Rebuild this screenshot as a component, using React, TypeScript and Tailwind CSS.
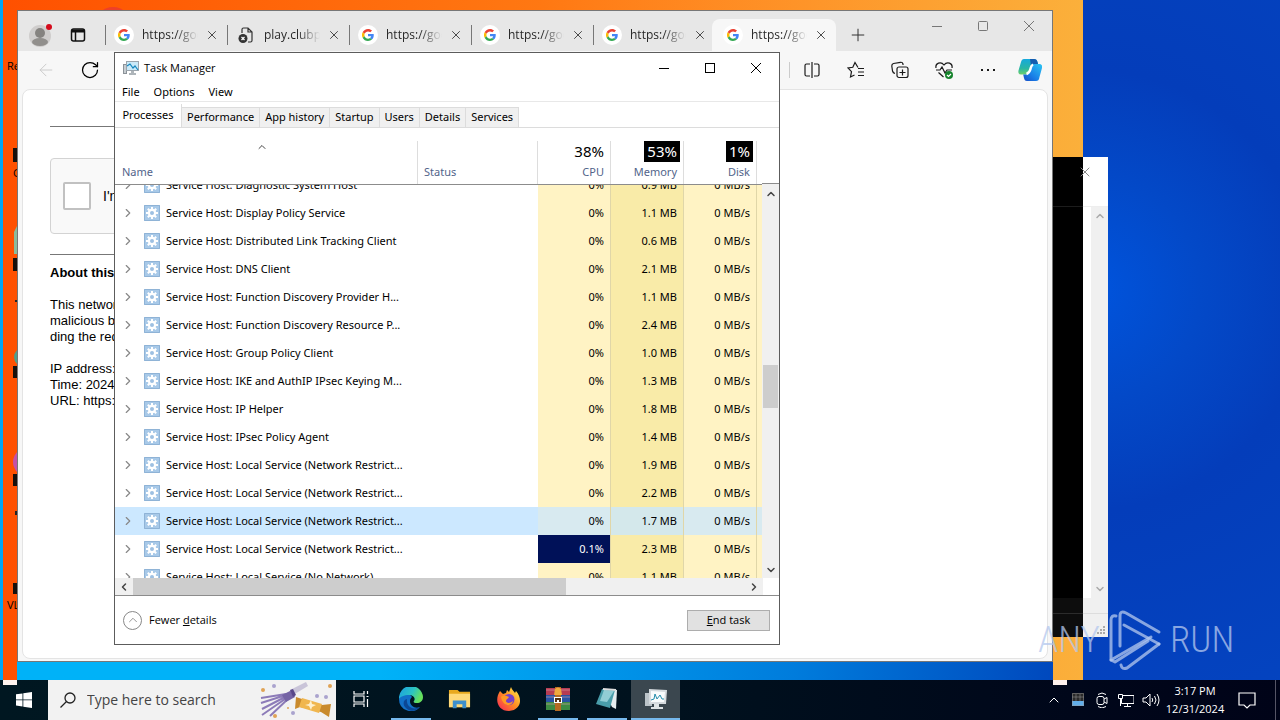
import { useLayoutEffect, useRef } from "react";
import type { ReactNode } from "react";
import { ArrowLeft, RotateCw, X, Plus, ChevronRight, ChevronUp, ChevronDown, ChevronLeft } from "lucide-react";

type Process = { name: string; cpu: string; memory: string; selected?: boolean; hot?: boolean };

const processes: Process[] = [
  { name: "Service Host: Diagnostic System Host", cpu: "0%", memory: "0.9 MB" },
  { name: "Service Host: Display Policy Service", cpu: "0%", memory: "1.1 MB" },
  { name: "Service Host: Distributed Link Tracking Client", cpu: "0%", memory: "0.6 MB" },
  { name: "Service Host: DNS Client", cpu: "0%", memory: "2.1 MB" },
  { name: "Service Host: Function Discovery Provider H...", cpu: "0%", memory: "1.1 MB" },
  { name: "Service Host: Function Discovery Resource P...", cpu: "0%", memory: "2.4 MB" },
  { name: "Service Host: Group Policy Client", cpu: "0%", memory: "1.0 MB" },
  { name: "Service Host: IKE and AuthIP IPsec Keying M...", cpu: "0%", memory: "1.3 MB" },
  { name: "Service Host: IP Helper", cpu: "0%", memory: "1.8 MB" },
  { name: "Service Host: IPsec Policy Agent", cpu: "0%", memory: "1.4 MB" },
  { name: "Service Host: Local Service (Network Restrict...", cpu: "0%", memory: "1.9 MB" },
  { name: "Service Host: Local Service (Network Restrict...", cpu: "0%", memory: "2.2 MB" },
  { name: "Service Host: Local Service (Network Restrict...", cpu: "0%", memory: "1.7 MB", selected: true },
  { name: "Service Host: Local Service (Network Restrict...", cpu: "0.1%", memory: "2.3 MB", hot: true },
  { name: "Service Host: Local Service (No Network)", cpu: "0%", memory: "1.1 MB" },
];

const browserTabs = [
  { title: "https://goo", google: true },
  { title: "play.clubpe", google: false },
  { title: "https://goo", google: true },
  { title: "https://goo", google: true },
  { title: "https://goo", google: true },
];

function GoogleIcon() {
  return (
    <span className="flex size-5 shrink-0 items-center justify-center rounded-full bg-white">
      <svg viewBox="0 0 48 48" className="size-3">
        <path fill="#ea4335" d="M24 9.5c3.5 0 6.700 1.200 9.200 3.600l6.900-6.900C35.900 2.400 30.500 0 24 0 14.600 0 6.500 5.400 2.600 13.200l8 6.200C12.400 13.700 17.700 9.500 24 9.500z" />
        <path fill="#4285f4" d="M47 24.600c0-1.600-.2-3.100-.4-4.600H24v9h12.900c-.6 3-2.300 5.500-4.800 7.200l7.700 6C44.400 38 47 32 47 24.600z" />
        <path fill="#fbbc05" d="M10.500 28.600a14.500 14.500 0 0 1 0-9.200l-8-6.200a24 24 0 0 0 0 21.600z" />
        <path fill="#34a853" d="M24 48c6.500 0 11.900-2.100 15.900-5.800l-7.700-6c-2.200 1.500-4.900 2.300-8.200 2.300-6.300 0-11.600-4.200-13.500-9.900l-8 6.200C6.500 42.600 14.600 48 24 48z" />
      </svg>
    </span>
  );
}

function BrokenPageIcon() {
  return (
    <svg viewBox="0 0 16 16" fill="none" stroke="#333" strokeWidth="1.200" className="size-4">
      <path d="M4 6V2.500Q4 1 5.500 1H10l4 4v8.500q0 1.500-1.500 1.500H10M10 1v4h4" />
      <circle cx="5" cy="11.500" r="4.500" fill="#333" stroke="none" />
      <path d="M3.500 10l3 3M6.500 10l-3 3" stroke="#fff" />
    </svg>
  );
}

function TaskManagerIcon() {
  return (
    <svg viewBox="0 0 16 16" className="size-4">
      <path fill="#8b9298" d="M0 4h4v10H0z" />
      <path fill="#c7cdd1" d="M1 5h2v8H1z" />
      <path fill="#9ba5ad" d="M3 1h13v10H3z" />
      <path fill="#c9e9f8" d="M4 2h11v8H4z" />
      <path d="M4 6l3-2 3 4 2-2 3 4" fill="none" stroke="#1686bd" strokeWidth="1.200" />
      <path fill="#aeb5ba" d="M8 11h3v2h2v2H6v-2h2z" />
    </svg>
  );
}

function GearIcon() {
  return (
    <svg viewBox="0 0 16 16" className="size-4 shrink-0">
      <path fill="#a8c9e8" d="M0 0h16v16H0z" />
      <path d="M.5.5h15v15H.5z" fill="none" stroke="#8fb3d6" />
      <path d="M8 2v12M2 8h12M3.800 3.800l8.400 8.400M12.200 3.800l-8.400 8.400" stroke="#fff" strokeWidth="2" />
      <circle cx="8" cy="8" r="4.200" fill="#fff" />
      <circle cx="8" cy="8" r="2" fill="#9dc0e2" />
    </svg>
  );
}

function CopilotIcon() {
  return (
    <svg viewBox="0 0 24 24" className="size-6">
      <defs>
        <linearGradient id="cp-left" x1="0" y1="0" x2="0" y2="1">
          <stop offset="0" stopColor="#16a9dd" />
          <stop offset=".6" stopColor="#29b6a5" />
          <stop offset="1" stopColor="#6ccf6b" />
        </linearGradient>
        <linearGradient id="cp-right" x1="1" y1="0" x2="0" y2="1">
          <stop offset="0" stopColor="#2cc5f2" />
          <stop offset=".6" stopColor="#197fe8" />
          <stop offset="1" stopColor="#164bc4" />
        </linearGradient>
      </defs>
      <path fill="url(#cp-left)" d="M6 1h10c2 0 3 1 3.500 3l.5 2h-4c-2 0-3 1-3.500 3l-2 6c-.5 1-1 1.500-2.500 1.500H3c-2.500 0-3-2-2.500-4l2.500-8.500C3.500 2 4.500 1 6 1z" />
      <path fill="#155caf" d="M12 1h4c2 0 3 1 3.500 3l.5 2h-4c-1.500 0-2.500.5-3 2z" />
      <path fill="url(#cp-right)" d="M18 23H9c-2 0-2.500-1-3-3l-.8-3.500H8c2 0 3-.5 3.500-2.500l2-6c.5-1.500 1.500-2 3-2H21c2.500 0 3.500 1.500 3 4l-2.500 9c-.5 3-1.500 4-3.500 4z" />
      <path d="M15 6.500c-2 1-2 2.500-2.500 4.500s-1 4-4 5" fill="none" stroke="#fff" strokeWidth="2.500" />
    </svg>
  );
}

function ToolbarIcon({ label, children }: { label: string; children: ReactNode }) {
  return (
    <button aria-label={label} className="flex w-11 items-center justify-center">
      <svg viewBox="0 0 18 18" fill="none" stroke="#1b1b1b" strokeWidth="1.200" className="size-[18px]">
        {children}
      </svg>
    </button>
  );
}

function CaptionButtons({ muted = false }: { muted?: boolean }) {
  const tone = muted ? "text-[#777]" : "text-black";
  return (
    <div className={`flex ${tone}`}>
      {["Minimize", "Maximize", "Close"].map((label) => (
        <button key={label} aria-label={label} className="flex h-[30px] w-[46px] items-center justify-center">
          <svg viewBox="0 0 12 12" fill="none" stroke="currentColor" className="size-3">
            {label === "Minimize" && <path d="M1 6.500h10" />}
            {label === "Maximize" && <rect x="1.500" y="1.500" width="9" height="9" rx={muted ? 1 : 0} />}
            {label === "Close" && <path d="M1 1l10 10M11 1L1 11" />}
          </svg>
        </button>
      ))}
    </div>
  );
}

function Browser() {
  return (
    <section className="absolute top-[10px] left-[17px] flex h-[652px] w-[1036px] flex-col border border-[#777] bg-[#f7f7f7]">
      <div className="flex h-10 shrink-0 bg-[#e7e7e7]">
        <button aria-label="Profile" className="flex w-11 items-center justify-center pt-2">
          <svg viewBox="0 0 24 24" className="size-6">
            <circle cx="12" cy="13" r="11" fill="#cfcdcc" />
            <circle cx="12" cy="10" r="5" fill="#858380" />
            <ellipse cx="12" cy="19" rx="8" ry="4" fill="#918f8c" />
            <circle cx="21" cy="4" r="3" fill="#d50b1c" />
          </svg>
        </button>
        <button aria-label="Tab actions" className="flex w-8 items-center justify-center pt-2">
          <svg viewBox="0 0 16 16" fill="none" stroke="#111" strokeWidth="1.500" className="size-4">
            <rect x="1.500" y="2" width="13" height="12" rx="2" />
            <path d="M2 4h12" strokeWidth="3" />
            <path d="M5.500 4v10" />
          </svg>
        </button>
        <div className="flex pt-2 pl-[11px]">
          {browserTabs.map((tab, i) => (
            <div key={i} className="flex w-[122px] items-center">
              <span className="h-5 border-l border-[#777]" />
              <span className="ml-2 flex w-5 justify-center">
                {tab.google ? <GoogleIcon /> : <BrokenPageIcon />}
              </span>
              <span className="ml-2 w-14 overflow-hidden bg-linear-to-r from-[#222] from-60% to-transparent bg-clip-text text-xs whitespace-nowrap text-transparent">
                {tab.title}
              </span>
              <button aria-label="Close tab" className="ml-[7px]">
                <X className="size-[14px] text-[#333]" strokeWidth={1.500} />
              </button>
            </div>
          ))}
          <div className="-ml-[3px] flex w-[124px] items-center rounded-t-lg bg-[#f7f7f7] pl-[11px]">
            <GoogleIcon />
            <span className="ml-2 w-14 overflow-hidden bg-linear-to-r from-[#222] from-60% to-transparent bg-clip-text text-xs whitespace-nowrap text-transparent">
              https://goo
            </span>
            <button aria-label="Close tab" className="ml-[7px]">
              <X className="size-[14px] text-[#333]" strokeWidth={1.500} />
            </button>
          </div>
          <button aria-label="New tab" className="flex w-11 items-center justify-center">
            <Plus className="size-5 text-[#333]" strokeWidth={1.200} />
          </button>
        </div>
        <div className="ml-auto">
          <CaptionButtons muted />
        </div>
      </div>
      <div className="flex h-[38px] shrink-0 items-center pr-[10px]">
        <button aria-label="Back" className="ml-4 flex w-6 justify-center">
          <ArrowLeft className="size-5 text-[#ccc]" strokeWidth={1.200} />
        </button>
        <button aria-label="Refresh" className="ml-5 flex w-6 justify-center">
          <RotateCw className="size-5 text-black" strokeWidth={1.500} />
        </button>
        <span className="ml-auto h-4 border-l border-[#ccc]" />
        <ToolbarIcon label="Split screen">
          <path d="M7 3H3.500Q2 3 2 4.500v9Q2 15 3.500 15H7M11 3h3.500Q16 3 16 4.500v9q0 1.500-1.500 1.500H11M9 1v16" />
        </ToolbarIcon>
        <ToolbarIcon label="Favorites">
          <path d="M11 6.500L8 1.500 5.800 6.300 1 7l3.500 3.600L3.500 16l4-2M11 7.500h6M11 11h6M11 14.500h6" />
        </ToolbarIcon>
        <ToolbarIcon label="Collections">
          <path d="M4 12.500Q2 12 1.500 10l-.7-5Q.7 3 2.500 2.500l7-1.200Q11.500 1 12 3v1" />
          <rect x="6" y="6" width="11" height="10.500" rx="2" />
          <path d="M11.500 8.500v6M8.500 11.500h6" />
        </ToolbarIcon>
        <ToolbarIcon label="Browser essentials">
          <path d="M1 7C0 2 6 0 9 4c3-4 9-2 8 3M1 9h4l2-3 3 6 2-3h5M3.500 11.500L8.500 16" />
          <circle cx="14" cy="14" r="4" fill="#16832c" stroke="none" />
          <path d="M12 14l1.500 1.500L16 13" stroke="#fff" />
        </ToolbarIcon>
        <ToolbarIcon label="Settings and more">
          <path d="M2 9h2M8 9h2M14 9h2" strokeWidth="2" />
        </ToolbarIcon>
        <button aria-label="Copilot" className="ml-2">
          <CopilotIcon />
        </button>
      </div>
      <main className="mx-1 mb-[2px] flex-1 rounded-lg border border-[#e4e4e4] bg-white px-[27px] pt-9 font-['Liberation_Sans',sans-serif] text-[13px] leading-4 text-black">
        <div className="max-w-[400px]">
          <hr className="border-[#777]" />
          <div className="mt-[31px] flex h-[76px] w-[302px] items-center rounded-sm border border-[#d3d3d3] bg-[#f9f9f9] pl-3">
            <input id="robot" type="checkbox" className="size-7 appearance-none rounded-xs border-2 border-[#c1c1c1] bg-white" />
            <label htmlFor="robot" className="ml-3 text-sm font-medium">I'm</label>
          </div>
          <hr className="mt-5 border-[#777]" />
          <h1 className="mt-[10px] font-bold">About this</h1>
          <p className="mt-4">
            This network
            <br />
            malicious b
            <br />
            ding the req
          </p>
          <p className="mt-4">
            IP address:
            <br />
            Time: 2024
            <br />
            URL: https:
          </p>
        </div>
      </main>
    </section>
  );
}

function UsageHead({ value, label, dark = false }: { value: string; label: string; dark?: boolean }) {
  return (
    <th className="sticky top-0 h-14 border-b border-[#8c8c8c] bg-white p-0 pt-[13px] text-right align-top font-normal">
      <div className="h-[43px] border-r border-[#ddd] pr-[3px]">
        <span className={dark ? "inline-block bg-black px-[3px] text-[15px] leading-[21px] text-white" : "inline-block px-[3px] text-[15px] leading-[21px] text-black"}>
          {value}
        </span>
        <div className="pt-[2px] pr-[3px] text-[#52648a]">{label}</div>
      </div>
    </th>
  );
}

function ProcessTable() {
  const scroller = useRef<HTMLDivElement>(null);

  // the list is scrolled by half a row
  useLayoutEffect(() => {
    if (scroller.current) scroller.current.scrollTop = 14;
  }, []);

  return (
    <div className="flex h-[451px] border-t border-[#dcdcdc]">
      <div ref={scroller} className="min-w-0 flex-1 overflow-hidden">
        <table className="w-full table-fixed border-separate border-spacing-0 leading-4">
          <colgroup>
            <col />
            <col className="w-[120px]" />
            <col className="w-[73px]" />
            <col className="w-[73px]" />
            <col className="w-[73px]" />
            <col className="w-[5px]" />
          </colgroup>
          <thead>
            <tr>
              <th className="sticky top-0 h-14 border-b border-[#8c8c8c] bg-white p-0 pt-[13px] text-left align-top font-normal text-[#52648a]">
                <div className="flex h-[43px] flex-col border-r border-[#ddd] pl-[7px]">
                  <ChevronUp className="ml-[134px] size-3 text-[#444]" />
                  <span className="mt-[11px]">Name</span>
                </div>
              </th>
              <th className="sticky top-0 h-14 border-b border-[#8c8c8c] bg-white p-0 pt-[13px] text-left align-top font-normal text-[#52648a]">
                <div className="h-[43px] border-r border-[#ddd] pt-[23px] pl-[6px]">Status</div>
              </th>
              <UsageHead value="38%" label="CPU" />
              <UsageHead value="53%" label="Memory" dark />
              <UsageHead value="1%" label="Disk" dark />
              <td className="sticky top-0 h-14 border-b border-[#8c8c8c] bg-white p-0" />
            </tr>
          </thead>
          <tbody>
            {processes.map((p, i) => {
              const light = p.selected ? "bg-[#d8eaf0]" : "bg-[#fff3c4]";
              const strong = p.selected ? "bg-[#d4e8eb]" : "bg-[#f9eba8]";
              return (
                <tr key={i} className={p.selected ? "bg-[#cce8ff]" : "bg-white"}>
                  <td className="h-7 p-0">
                    <div className="flex items-center pl-[6px] whitespace-nowrap">
                      <ChevronRight className="size-[14px] text-[#888]" strokeWidth={2} />
                      <span className="mr-[6px] ml-[9px]">
                        <GearIcon />
                      </span>
                      {p.name}
                    </div>
                  </td>
                  <td className="p-0" />
                  <td className={`border-r border-[#e0d6a8] p-0 pr-[6px] text-right ${p.hot ? "bg-[#001158] text-white" : light}`}>{p.cpu}</td>
                  <td className={`border-r border-[#e0d6a8] p-0 pr-[6px] text-right ${strong}`}>{p.memory}</td>
                  <td className={`border-r border-[#e0d6a8] p-0 pr-[6px] text-right ${light}`}>0 MB/s</td>
                  <td className={`p-0 ${light}`} />
                </tr>
              );
            })}
          </tbody>
        </table>
      </div>
      <div className="flex w-[17px] flex-col">
        <div className="h-14 border-b border-[#8c8c8c]" />
        <div className="flex flex-1 flex-col items-center bg-[#f0f0f0] pt-1 pb-[2px]">
          <ChevronUp className="size-3 text-[#444]" strokeWidth={3} />
          <div className="mt-[165px] h-[43px] w-[15px] bg-[#cdcdcd]" />
          <ChevronDown className="mt-auto size-3 text-[#444]" strokeWidth={3} />
        </div>
      </div>
    </div>
  );
}

function TaskManager() {
  return (
    <section className="absolute top-[52px] left-[114px] w-[666px] border border-[#5c5c5c] bg-white font-['Noto_Sans','Open_Sans',sans-serif] text-[11px] text-black">
      <header className="flex h-[30px] items-center pl-2">
        <TaskManagerIcon />
        <h2 className="ml-[5px] font-['Open_Sans','Noto_Sans',sans-serif]">Task Manager</h2>
        <div className="ml-auto">
          <CaptionButtons />
        </div>
      </header>
      <nav className="flex h-[19px] items-center gap-[14px] border-b border-[#e8e8e8] px-[7px] pt-px">
        <button>File</button>
        <button>Options</button>
        <button>View</button>
      </nav>
      <div role="tablist" className="flex h-[25px] items-end pt-[2px]">
        <button role="tab" aria-selected="true" className="h-[23px] w-[67px] border-r border-[#dcdcdc] text-center">Processes</button>
        {["Performance", "App history", "Startup", "Users", "Details", "Services"].map((tab) => (
          <button key={tab} role="tab" className="h-5 border-t border-r border-[#dcdcdc] bg-[#f0f0f0] px-[5px]">
            {tab}
          </button>
        ))}
      </div>
      <ProcessTable />
      <div className="flex h-[18px] border-b border-[#8c8c8c] pr-4">
        <div className="flex flex-1 items-center bg-[#f0f0f0] px-[3px]">
          <ChevronLeft className="size-3 text-[#444]" strokeWidth={3} />
          <div className="ml-[3px] h-full w-[433px] bg-[#cdcdcd]" />
          <ChevronRight className="ml-auto size-3 text-[#444]" strokeWidth={3} />
        </div>
      </div>
      <footer className="flex h-12 items-center justify-between px-2 font-['Open_Sans','Noto_Sans',sans-serif]">
        <button className="flex items-center gap-[7px]">
          <span className="flex size-[19px] items-center justify-center rounded-full border border-[#888]">
            <ChevronUp className="size-[14px] text-[#888]" strokeWidth={1.500} />
          </span>
          <span>
            Fewer <u>d</u>etails
          </span>
        </button>
        <button className="mr-px h-[21px] w-[83px] border border-[#adadad] bg-[#e1e1e1]">
          <u>E</u>nd task
        </button>
      </footer>
    </section>
  );
}

// Sliver of the window that sits behind the browser; its left part is inverted
function BackWindow() {
  return (
    <section className="absolute top-[157px] left-[1053px] flex h-[480px] w-[55px] bg-white">
      <div className="flex w-[30px] flex-col bg-black">
        <div className="h-[50px] border-b border-[#1c1c1c]" />
        <div className="mt-auto h-4 border-b border-[#2c2c2c] bg-[#0d0d0d]" />
        <div className="h-[23px] bg-[#0d0d0d]" />
      </div>
      <div className="flex flex-1 flex-col">
        <div className="h-[50px] border-b border-[#eee] pt-[7px]">
          <X className="-ml-[6px] size-4 text-[#888]" strokeWidth={1.500} />
        </div>
        <div className="ml-2 flex flex-1 flex-col items-center justify-between bg-[#f0f0f0] py-[3px]">
          <ChevronUp className="size-3 text-[#aaa]" strokeWidth={3} />
          <ChevronDown className="size-3 text-[#aaa]" strokeWidth={3} />
        </div>
        <div className="h-4 border-b border-[#ddd] bg-[#f0f0f0]" />
        <div className="flex h-[23px] items-end justify-end bg-[#f0f0f0] p-[2px]">
          <svg viewBox="0 0 9 9" fill="#aaa" className="size-[9px]">
            <path d="M6 0h2v2H6zM3 3h2v2H3zM6 3h2v2H6zM0 6h2v2H0zM3 6h2v2H3zM6 6h2v2H6z" />
          </svg>
        </div>
      </div>
    </section>
  );
}

function Watermark() {
  return (
    <div className="absolute top-[608px] left-[1038px] flex items-center gap-2 font-['Roboto_Condensed','Liberation_Sans_Narrow','Liberation_Sans',sans-serif] text-[37px] leading-[64px] font-light text-[#b4c8ee]/75">
      <span>ANY</span>
      <svg viewBox="0 0 54 64" fill="none" stroke="currentColor" strokeWidth="3" strokeLinejoin="round" strokeLinecap="round" className="h-16 w-[54px]">
        <path d="M8 8Q3 7 3 12v40L43 29" />
        <path d="M51 24L18 5q-6-3-6 3v30M16 17l35 19" />
        <path d="M3 52l4 2 33-21M51 36L19 60q-5 2-6-3" />
      </svg>
      <span>RUN</span>
    </div>
  );
}

// Only the left edges of the desktop icons show beside the browser
function DesktopStrip() {
  return (
    <div className="absolute top-0 left-[3px] h-[680px] w-[1080px] overflow-hidden bg-linear-to-r from-[#ff5000] via-[#ff7812] to-[#fbb03b] text-[11px]">
      <svg viewBox="0 0 140 680" className="absolute top-0 left-0 h-[680px] w-[140px]">
        <circle cx="110" cy="26" r="19" fill="#ee4028" />
        <path d="M10 148h4v14h-4zM10 258h4v13h-4zM10 366h4v12h-4zM10 474h4v12h-4zM10 583h4v11h-4z" fill="#16100c" />
        <path d="M14 226l-3 6v22h3z" fill="#8bbb9b" />
        <path d="M14 350q-6 7 0 14z" fill="#4e9e8b" />
        <path d="M14 452q-8 10 0 20z" fill="#c451a8" />
        <path d="M12 300h2v2h-2zM12 511h2v4h-2z" fill="#222" />
      </svg>
      <div className="flex w-20 flex-col pl-1 leading-4">
        <span className="mt-[58px]">Re</span>
        <span className="mt-[91px] ml-[6px]">G</span>
        <span className="mt-[416px]">VL</span>
      </div>
    </div>
  );
}

function TaskButton({ label, open, active, children }: { label: string; open?: boolean; active?: boolean; children: ReactNode }) {
  return (
    <button aria-label={label} className={`flex h-full w-[49px] flex-col items-center ${active ? "bg-[#3b474f]" : ""}`}>
      <span className="flex flex-1 items-center">{children}</span>
      <span className={`h-[2px] ${active ? "w-full" : "w-10"} ${open ? "bg-[#76b9ed]" : ""}`} />
    </button>
  );
}

function Taskbar() {
  return (
    <footer className="relative flex h-10 shrink-0 bg-linear-to-r from-[#001721] via-[#00121e] via-50% to-[#000318]">
      <button aria-label="Start" className="flex w-12 items-center justify-center">
        <svg viewBox="0 0 16 16" fill="#fff" className="size-4">
          <path d="M0 2.300L6.500 1.400v6.100H0zM7.300 1.300L16 0v7.500H7.300zM0 8.300h6.500v6.200L0 13.600zM7.300 8.300H16V16l-8.700-1.300z" />
        </svg>
      </button>
      <div className="flex w-72 items-center bg-[#f2f2f2] pl-3">
        <svg viewBox="0 0 16 16" fill="none" stroke="#222" strokeWidth="1.300" className="size-4">
          <circle cx="10" cy="6" r="5" />
          <path d="M6.500 9.500L.5 15.500" />
        </svg>
        <input aria-label="Search" placeholder="Type here to search" className="ml-[11px] w-40 text-sm outline-none placeholder:text-[#444]" />
        <svg viewBox="0 0 76 38" className="ml-auto h-[38px] w-[76px]">
          <g stroke="#8c7bb8" strokeWidth="2" fill="none">
            <path d="M26 13L1 17M26 14L1 22M27 15L2 28M28 16L2 34M30 16L10 35" />
          </g>
          <path d="M22 14l10-5 3 7-9 5z" fill="#7564a5" />
          <path d="M30 9l16-8 2 4-15 9z" fill="#c9c4d8" />
          <path d="M30 9l3-1 3 6-3 2z" fill="#584789" />
          <path d="M36 16l6 2 20 6 9-1-2 13-8-5-21-5-5 2z" fill="#c98a2c" />
          <path d="M42 17l20 6-3 9-20-6z" fill="#f0b64e" />
          <path d="M51 19l1 4 4 1-4 2-1 3-2-4-4-1 4-1z" fill="#fff1cf" />
          <g fill="#e0a356">
            <circle cx="3" cy="9" r="2" />
            <circle cx="70" cy="5" r="2" />
            <circle cx="15" cy="35" r="2" />
            <circle cx="28" cy="27" r="1" />
          </g>
          <g fill="#aaa3ce">
            <circle cx="14" cy="5" r="2" />
            <circle cx="33" cy="32" r="2" />
            <circle cx="57" cy="15" r="2" />
            <circle cx="66" cy="16" r="2" />
          </g>
        </svg>
      </div>
      <div className="mr-px">
        <TaskButton label="Task View">
          <svg viewBox="0 0 18 18" fill="none" stroke="#fff" strokeWidth="1.200" className="size-[18px]">
            <path d="M2 1v3h10V1M2 17v-3h10v3M2 6h10v6H2zM15.500 1v3M15.500 9v8M14.500 6.500h2" />
          </svg>
        </TaskButton>
      </div>
      <TaskButton label="Microsoft Edge" open>
        <svg viewBox="0 0 24 24" className="size-6">
          <defs>
            <linearGradient id="edge-top" x1="0" y1="0" x2="1" y2=".4">
              <stop offset="0" stopColor="#1b9de2" />
              <stop offset=".6" stopColor="#2bc3c4" />
              <stop offset="1" stopColor="#66e05c" />
            </linearGradient>
          </defs>
          <path fill="#1270c8" d="M0 12a12 12 0 0 0 21 8c-5 2-10-1-10-6 0-2 1-3 2-4C10 5 1 6 0 12z" />
          <path fill="#0b4795" d="M8 12c-1 7 5 12 13 8-3 4-9 5-13 2-5-4-4-9 0-10z" />
          <path fill="url(#edge-top)" d="M0 12A12 12 0 0 1 24 10c0 4-3 6-6 6-3 0-4-1-3-2 2-3-1-6-5-6-5 0-9 2-10 4z" />
        </svg>
      </TaskButton>
      <TaskButton label="File Explorer">
        <svg viewBox="0 0 24 24" className="size-[23px]">
          <path fill="#e8a91f" d="M1 2h9l2 2h11v16H1z" />
          <path fill="#ffd978" d="M1 6h22v14H1z" />
          <path fill="#3d8fcc" d="M5 13h14v8h-4v-4H9v4H5z" />
        </svg>
      </TaskButton>
      <TaskButton label="Firefox">
        <svg viewBox="0 0 24 24" className="size-6">
          <defs>
            <linearGradient id="fox" x1="1" y1="0" x2="0" y2="1">
              <stop offset="0" stopColor="#fff44f" />
              <stop offset=".5" stopColor="#ff8b22" />
              <stop offset="1" stopColor="#f51e5c" />
            </linearGradient>
          </defs>
          <path fill="url(#fox)" d="M3 4l3 3 3-1 1-3 2 2 2-5c1 3 3 4 4 6l1-2c7 8 5 19-7 20C1 24-3 13 3 4z" />
          <circle cx="12" cy="12.500" r="5.500" fill="#7540c8" />
          <path fill="#ff9a24" d="M4 10c2-2 5-2 8 0-1 2-3 2-3 4s4 3 7 0c-1 6-10 6-12-4z" />
        </svg>
      </TaskButton>
      <TaskButton label="WinRAR" open>
        <svg viewBox="0 0 24 24" className="size-6">
          <path fill="#b63c53" d="M0 1h24v7H0z" />
          <path fill="#2853a4" d="M0 8h24v7H0z" />
          <path fill="#3c8b43" d="M0 15h24v8H0z" />
          <path stroke="#dca2a7" d="M0 3h24M0 10h24M0 17h24" opacity=".6" />
          <path fill="#b56a22" d="M9 0h6v24H9z" />
          <path fill="#f0a93d" d="M9 2q3-3 6 0l1 6H8z" />
          <path fill="#fff" d="M8 10h8v6H8z" />
          <path d="M10 15v-3h4v3" fill="none" stroke="#573313" strokeWidth="2" />
        </svg>
      </TaskButton>
      <TaskButton label="Notepad" open>
        <svg viewBox="0 0 24 24" className="size-6">
          <path fill="#e5edf0" d="M8 2l14 1-1 19-4-2z" />
          <path fill="#499daa" d="M7 2l13 1-5 18L1 17z" />
          <path fill="#91cdd5" d="M9 3l10 1-7 11-7-1z" />
          <path d="M8 2l13 1" stroke="#ddd" strokeWidth="2" />
        </svg>
      </TaskButton>
      <TaskButton label="Task Manager" open active>
        <svg viewBox="0 0 24 24" className="size-6">
          <path fill="#bcc4c9" d="M1 6h7v13H1z" />
          <path fill="#d5dade" d="M5 2l18 1-1 14H5z" />
          <path fill="#f8fbfc" d="M7 4l14 1-1 10H7z" />
          <path d="M7 13l3-1 1-5 2 5 3-4 2 4h2" fill="none" stroke="#248dac" />
          <path fill="#dfe4e6" d="M10 17h5v3h4v2H7v-2h3z" />
        </svg>
      </TaskButton>
      <div className="ml-auto flex items-center text-white">
        <div className="flex gap-2">
          <ChevronUp className="size-4" strokeWidth={1.500} />
          <svg viewBox="0 0 16 16" className="size-4">
            <path fill="#2a2a2a" d="M2 1h12v13H2z" />
            <path fill="#62aee9" d="M2 9h12v5H2z" />
            <path d="M2.500 1.500h11v12h-11zM2 5h12M6 2v7M10 2v7" fill="none" stroke="#999" strokeWidth=".5" />
          </svg>
          <svg viewBox="0 0 16 16" fill="none" stroke="#fff" className="size-4">
            <rect x="3" y="4.500" width="7" height="8" rx="2" />
            <path d="M10 7l3-1.500v6L10 10M4 2.500Q8-.5 12 2.500M4 14.500q4 3 8 0" />
          </svg>
          <svg viewBox="0 0 16 16" fill="none" stroke="#fff" className="size-4">
            <path d="M5 3.500h11v8H3.500V7M6 14.500h7M9.500 12v2M.5 2.500h4v4h-4zM2.500 7v7" />
          </svg>
          <svg viewBox="0 0 18 16" fill="none" stroke="#fff" className="h-4 w-[18px]">
            <path d="M1 6v4h3l4 4V2L4 6zM10 6q1.500 2 0 4M12.500 4q3 4 0 8M15 2q4 6 0 12" />
          </svg>
        </div>
        <div className="w-[70px] text-center text-[11px] leading-[18px]">
          3:17 PM
          <br />
          12/31/2024
        </div>
        <button aria-label="Notifications" className="flex w-[34px] justify-center">
          <svg viewBox="0 0 18 18" fill="none" stroke="#fff" strokeWidth="1.200" className="size-[18px]">
            <path d="M1 2h16v12h-5l-3 3-3-3H1z" />
          </svg>
        </button>
        <span className="ml-[11px] h-10 w-[5px] border-l border-[#556]" />
      </div>
      <span className="absolute top-0 left-[3px] h-[5px] w-[14px] bg-[#fff3ee]" />
      <span className="absolute top-0 left-[1053px] h-[5px] w-[14px] bg-[#fff3ee]" />
    </footer>
  );
}

export default function App() {
  return (
    <div className="flex h-screen flex-col overflow-hidden font-['Open_Sans','Noto_Sans',sans-serif]">
      <div className="relative flex-1 bg-[radial-gradient(circle_at_1090px_290px,#0054dd,#0349c8_110px,#043dba_220px,#0444c0_460px)]">
        <DesktopStrip />
        <div className="absolute bottom-0 left-[17px] h-5 w-[1036px] bg-linear-to-r from-[#00b2f8] from-35% via-[#007cdc] via-75% to-[#0048bd]" />
        <div className="absolute top-0 left-0 h-full w-[3px] bg-[#00a5f5]" />
        <BackWindow />
        <Browser />
        <TaskManager />
        <Watermark />
      </div>
      <Taskbar />
    </div>
  );
}
